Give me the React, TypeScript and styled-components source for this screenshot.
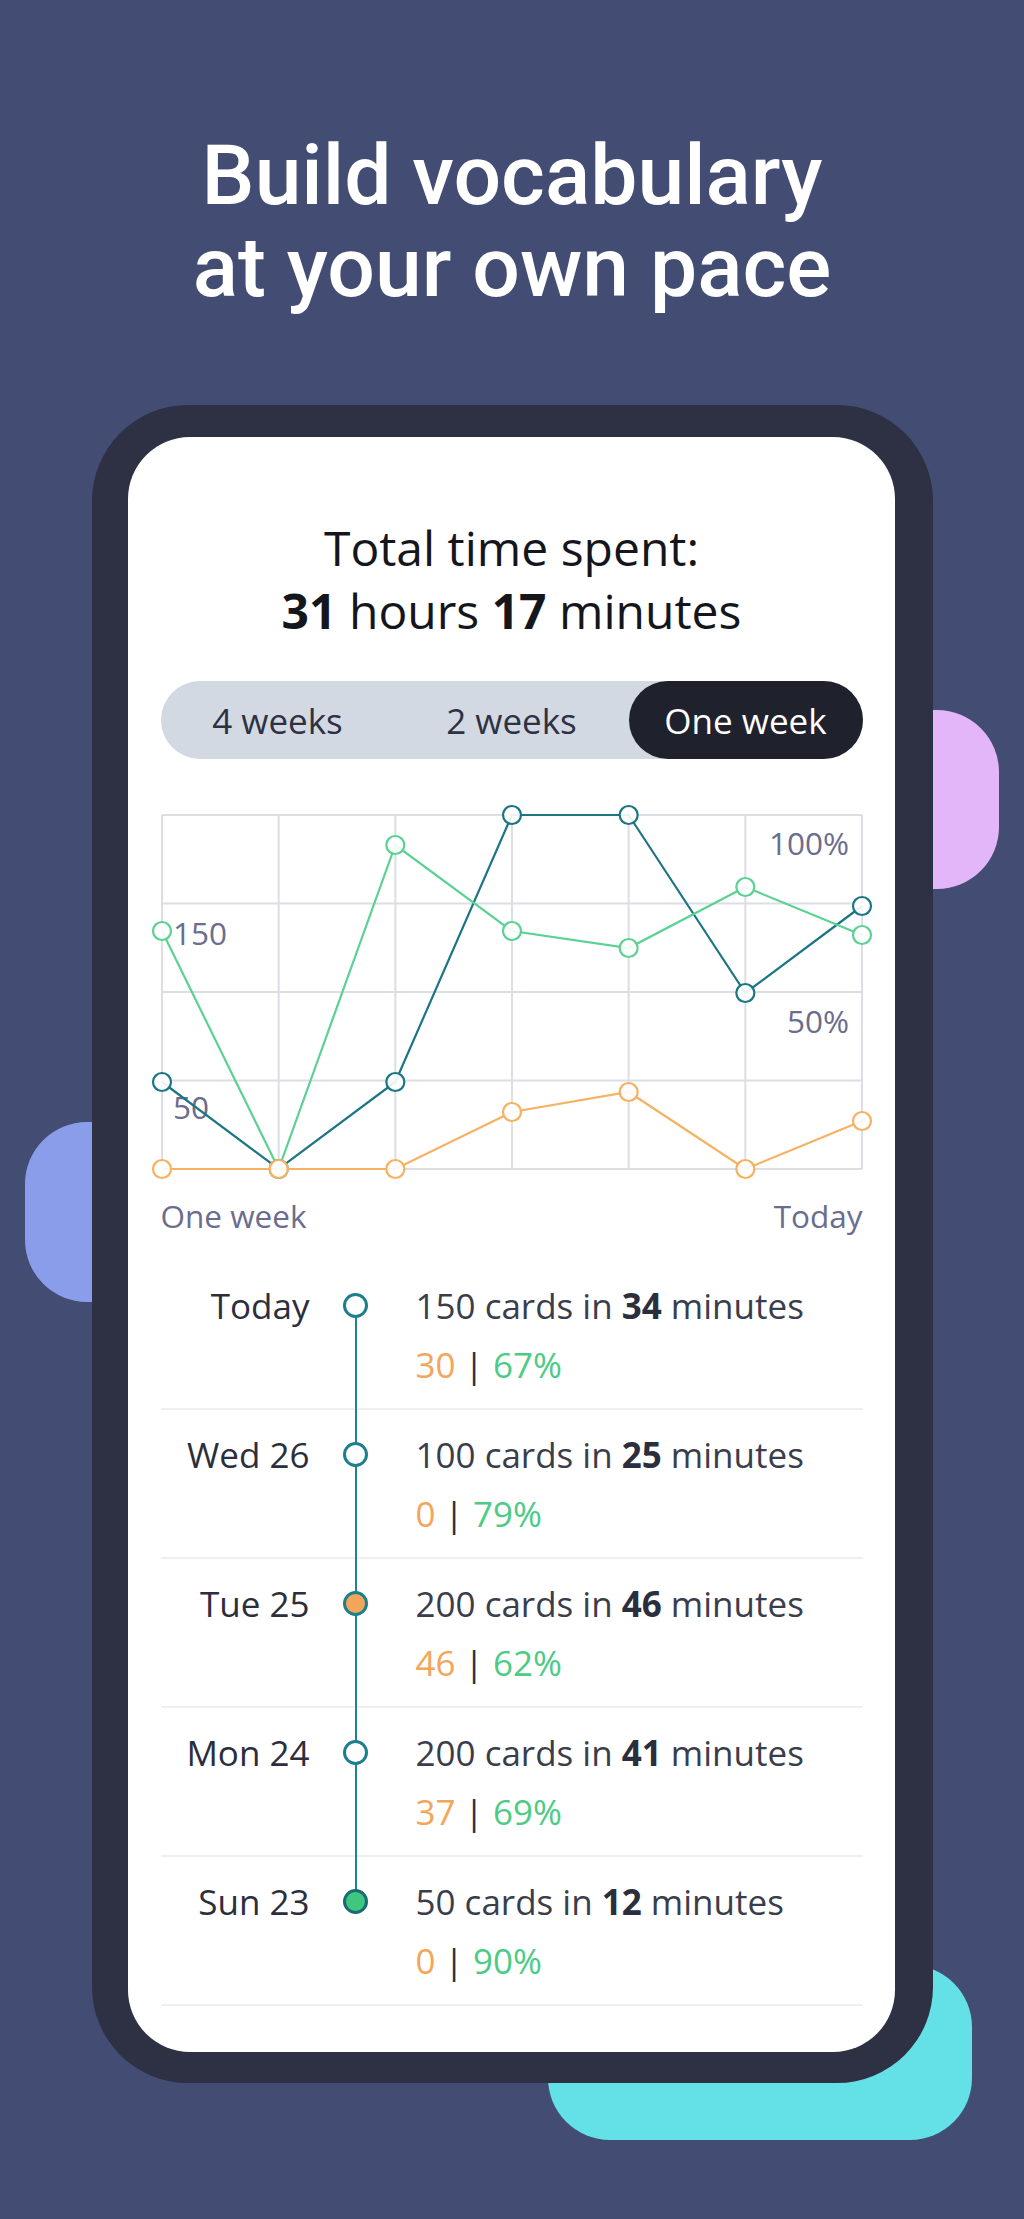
import React from 'react'
import styled, { createGlobalStyle } from 'styled-components'

const GlobalStyle = createGlobalStyle`
	html, body {
		margin: 0;
		padding: 0;
		background: #434c72;
	}
	* {
		box-sizing: border-box;
	}
`

const Page = styled.div`
	width: 1024px;
	min-height: 2219px;
	background: #434c72;
	padding-top: 130px;
	overflow: hidden;
`
const Headline = styled.h1`
	margin: 0;
	font-family: Roboto, 'Liberation Sans', sans-serif;
	font-weight: 500;
	font-size: 84px;
	line-height: 92px;
	color: #fff;
	text-align: center;
`
const PhoneWrap = styled.div`
	position: relative;
	width: 841px;
	margin: 91px auto 0;
`
const Blob = styled.div<{ $color: string, $left: number, $top: number, $w: number, $h: number }>`
	position: absolute;
	left: ${({$left}) => $left}px;
	top: ${({$top}) => $top}px;
	width: ${({$w}) => $w}px;
	height: ${({$h}) => $h}px;
	border-radius: 62px;
	background: ${({$color}) => $color};
	z-index: 0;
`
const Phone = styled.div`
	position: relative;
	z-index: 1;
	background: #2e3143;
	border-radius: 96px;
	padding: 32px 38px 31px 36px;
`
const Screen = styled.div`
	background: #fff;
	border-radius: 62px;
	height: 1615px;
	overflow: hidden;
	padding: 79px 32px 0 33px;
	font-family: 'Open Sans', 'Noto Sans', sans-serif;
`
const Total = styled.div`
	text-align: center;
	font-size: 48px;
	line-height: 63px;
	color: #15161c;
	b {
		font-weight: 700;
	}
`
const Segmented = styled.div`
	margin-top: 39px;
	display: flex;
	height: 78px;
	border-radius: 39px;
	background: #d3d9e2;
`
const Segment = styled.div<{ $active?: boolean }>`
	flex: 1;
	display: flex;
	align-items: center;
	justify-content: center;
	border-radius: 39px;
	font-size: 35px;
	color: ${({$active}) => $active ? '#fff' : '#2e3142'};
	background: ${({$active}) => $active ? '#1f222d' : 'transparent'};
`
const ChartBox = styled.div`
	margin-top: 46px;
	height: 370px;
	svg {
		display: block;
		overflow: visible;
	}
`
const AxisRow = styled.div`
	margin-top: 21px;
	display: flex;
	justify-content: space-between;
	font-size: 31.5px;
	line-height: 40px;
	color: #6a6d8e;
`
const Timeline = styled.div`
	margin-top: 25px;
`
const Row = styled.div`
	display: grid;
	grid-template-columns: 149px 92px 1fr;
	padding: 15px 0 14px;
	border-bottom: 2px solid #eeeff2;
	font-size: 35px;
	line-height: 59px;
`
const Day = styled.div`
	text-align: right;
	color: #2b2e3c;
`
const DotCell = styled.div<{ $last?: boolean }>`
	position: relative;
	height: 59px;
	display: flex;
	align-items: center;
	justify-content: center;
	&::after {
		content: '';
		display: ${({$last}) => $last ? 'none' : 'block'};
		position: absolute;
		left: 45px;
		top: 29px;
		width: 2px;
		height: 149px;
		background: #1b8592;
		z-index: 0;
	}
`
const Dot = styled.span<{ $fill: string, $ring: string }>`
	position: relative;
	z-index: 1;
	width: 25px;
	height: 25px;
	border-radius: 50%;
	border: 3px solid ${({$ring}) => $ring};
	background: ${({$fill}) => $fill};
`
const Info = styled.div`
	padding-left: 14px;
	color: #3a3d4c;
	b {
		font-weight: 700;
		color: #2b2e3c;
	}
`
const Score = styled.div`
	color: #2b2e3c;
`
const Wrong = styled.span`
	color: #f3a65b;
`
const Right = styled.span`
	color: #4ccb86;
`

const W = 702
const gridX = (i: number) => 1 + i * 700 / 6
const gridY = [10, 98.5, 187, 275.5, 364]

const series = [
	{ color: '#1b7584', ys: [277, 364, 277, 10, 10, 188, 101] },
	{ color: '#5bd193', ys: [126, 364, 40, 126, 143, 82, 130] },
	{ color: '#f6b163', ys: [364, 364, 364, 307, 287, 364, 316] },
]

const Chart = () => (
	<svg width={W} height={370} viewBox={`0 0 ${W} 370`}>
		{gridY.map(y => <line key={'h' + y} x1={1} x2={701} y1={y} y2={y} stroke="#dcdee5" strokeWidth={2} />)}
		{[0, 1, 2, 3, 4, 5, 6].map(i =>
			<line key={'v' + i} x1={gridX(i)} x2={gridX(i)} y1={10} y2={364} stroke="#dcdee5" strokeWidth={2} />)}
		<g fontFamily="'Open Sans', 'Noto Sans', sans-serif" fontSize={31.5} fill="#6a6d8e">
			<text x={688} y={50} textAnchor="end">100%</text>
			<text x={688} y={228} textAnchor="end">50%</text>
			<text x={12} y={140}>150</text>
			<text x={12} y={314}>50</text>
		</g>
		{series.map(s => (
			<g key={s.color}>
				<polyline
					points={s.ys.map((y, i) => `${gridX(i)},${y}`).join(' ')}
					fill="none" stroke={s.color} strokeWidth={2.2}
				/>
				{s.ys.map((y, i) =>
					<circle key={i} cx={gridX(i)} cy={y} r={9} fill="#fff" fillOpacity={0.9} stroke={s.color} strokeWidth={2.2} />)}
			</g>
		))}
	</svg>
)

const days = [
	{ day: 'Today', cards: 150, mins: 34, wrong: 30, right: 67, fill: '#fff', ring: '#1b7f8c' },
	{ day: 'Wed 26', cards: 100, mins: 25, wrong: 0, right: 79, fill: '#fff', ring: '#1b7f8c' },
	{ day: 'Tue 25', cards: 200, mins: 46, wrong: 46, right: 62, fill: '#f3a55a', ring: '#1b7f8c' },
	{ day: 'Mon 24', cards: 200, mins: 41, wrong: 37, right: 69, fill: '#fff', ring: '#1b7f8c' },
	{ day: 'Sun 23', cards: 50, mins: 12, wrong: 0, right: 90, fill: '#3fc67f', ring: '#176d72' },
]

const App = () => (
	<Page>
		<GlobalStyle />
		<Headline>Build vocabulary<br />at your own pace</Headline>
		<PhoneWrap>
			<Blob $color="#e2b6f8" $left={747} $top={305} $w={160} $h={179} />
			<Blob $color="#8a9dea" $left={-67} $top={717} $w={160} $h={180} />
			<Blob $color="#63e1e6" $left={456} $top={1560} $w={424} $h={175} />
			<Phone>
				<Screen>
					<Total>
						Total time spent:<br />
						<b>31</b> hours <b>17</b> minutes
					</Total>
					<Segmented>
						<Segment>4 weeks</Segment>
						<Segment>2 weeks</Segment>
						<Segment $active>One week</Segment>
					</Segmented>
					<ChartBox>
						<Chart />
					</ChartBox>
					<AxisRow>
						<span>One week</span>
						<span>Today</span>
					</AxisRow>
					<Timeline>
						{days.map((d, i) => (
							<Row key={d.day}>
								<Day>{d.day}</Day>
								<DotCell $last={i === days.length - 1}>
									<Dot $fill={d.fill} $ring={d.ring} />
								</DotCell>
								<Info>
									{d.cards} cards in <b>{d.mins}</b> minutes
									<Score><Wrong>{d.wrong}</Wrong> | <Right>{d.right}%</Right></Score>
								</Info>
							</Row>
						))}
					</Timeline>
				</Screen>
			</Phone>
		</PhoneWrap>
	</Page>
)

export default App
